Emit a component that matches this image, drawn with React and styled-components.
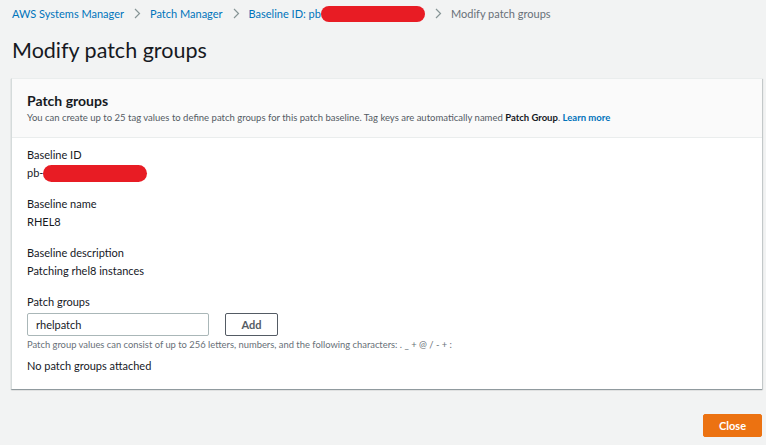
import React from 'react';
import styled, { createGlobalStyle } from 'styled-components';

const GlobalStyle = createGlobalStyle`
  html, body {
    margin: 0;
    padding: 0;
    background: #f2f3f3;
  }
  body {
    font-family: Lato, "Open Sans", Arial, sans-serif;
    color: #16191f;
  }
`;

const Page = styled.div`
  width: 766px;
  height: 445px;
  box-sizing: border-box;
  padding: 0 4px 0 11px;
  display: flex;
  flex-direction: column;
`;

const Crumbs = styled.nav`
  display: flex;
  align-items: center;
  height: 27px;
  font-size: 11px;
  padding-left: 1px;
`;

const Crumb = styled.span`
  color: ${props => (props.current ? '#687078' : '#0073bb')};
  white-space: nowrap;
  display: inline-flex;
  align-items: center;
`;

const Sep = styled.span`
  display: inline-flex;
  align-items: center;
  margin: 0 9px 0 10px;
  color: #879596;
`;

const Redact = styled.span`
  display: inline-block;
  width: ${props => props.w}px;
  height: ${props => props.h}px;
  border-radius: ${props => props.h / 2}px;
  background: #e81c24;
  vertical-align: middle;
`;

const Title = styled.h1`
  margin: 8px 0 13px;
  font-size: 21.5px;
  font-weight: 400;
  line-height: 30px;
  padding-left: 1px;
`;

const Card = styled.section`
  background: #fff;
  border-top: 1px solid #eaeded;
  border-left: 1px solid #d5dbdb;
  box-shadow: 0 1px 1px 0 rgba(0, 28, 36, 0.3), 1px 1px 1px 0 rgba(0, 28, 36, 0.15);
`;

const CardHeader = styled.header`
  background: #fafafa;
  border-bottom: 1px solid #eaeded;
  padding: 12px 15px 12px;
`;

const CardTitle = styled.h2`
  margin: 0;
  font-size: 14px;
  font-weight: 700;
  line-height: 20px;
`;

const CardDesc = styled.p`
  margin: 0;
  font-size: 9.5px;
  line-height: 14px;
  color: #545b64;
  white-space: nowrap;
  b { font-weight: 700; color: #16191f; }
  a { color: #0073bb; font-weight: 700; text-decoration: none; }
`;

const CardBody = styled.div`
  padding: 8px 15px 14px;
  display: flex;
  flex-direction: column;
  gap: 13px;
`;

const Field = styled.div`
  display: flex;
  flex-direction: column;
`;

const Label = styled.div`
  font-size: 11px;
  line-height: 18px;
`;

const Value = styled.div`
  font-size: 11px;
  line-height: 18px;
  display: flex;
  align-items: center;
`;

const InputRow = styled.div`
  display: flex;
  align-items: center;
  gap: 16px;
  margin-top: 2px;
`;

const Input = styled.input`
  box-sizing: border-box;
  width: 182px;
  height: 23px;
  border: 1px solid #aab7b8;
  border-radius: 2px;
  padding: 0 8px;
  font-family: inherit;
  font-size: 11px;
  color: #16191f;
  background: #fff;
  outline: none;
`;

const Button = styled.button`
  box-sizing: border-box;
  height: ${props => props.h || 23}px;
  width: ${props => props.w}px;
  padding: 0;
  border-radius: 2px;
  font-family: inherit;
  font-size: 11px;
  font-weight: 700;
  cursor: pointer;
  border: 1px solid ${props => (props.primary ? '#ec7211' : '#545b64')};
  background: ${props => (props.primary ? '#ec7211' : '#fff')};
  color: ${props => (props.primary ? '#fff' : '#545b64')};
`;

const Hint = styled.div`
  font-size: 9.4px;
  line-height: 12px;
  color: #687078;
  margin-top: 3px;
  white-space: nowrap;
`;

const Empty = styled.div`
  font-size: 11px;
  line-height: 18px;
  margin-top: -7px;
`;

const Footer = styled.div`
  display: flex;
  justify-content: flex-end;
  padding-top: 25px;
`;

const Chevron = () => (
  <svg width="7" height="11" viewBox="0 0 7 11">
    <path d="M1 1l4.5 4.5L1 10" fill="none" stroke="#879596" strokeWidth="1.2" />
  </svg>
);

export default function App() {
  return (
    <>
      <GlobalStyle />
      <Page>
        <Crumbs>
          <Crumb>AWS Systems Manager</Crumb>
          <Sep><Chevron /></Sep>
          <Crumb>Patch Manager</Crumb>
          <Sep><Chevron /></Sep>
          <Crumb>Baseline ID: pb<Redact w={104} h={16} /></Crumb>
          <Sep><Chevron /></Sep>
          <Crumb current>Modify patch groups</Crumb>
        </Crumbs>
        <Title>Modify patch groups</Title>
        <Card>
          <CardHeader>
            <CardTitle>Patch groups</CardTitle>
            <CardDesc>
              You can create up to 25 tag values to define patch groups for this patch baseline. Tag keys are automatically named <b>Patch Group</b>. <a href="#">Learn more</a>
            </CardDesc>
          </CardHeader>
          <CardBody>
            <Field>
              <Label>Baseline ID</Label>
              <Value>pb-<Redact w={104} h={17} /></Value>
            </Field>
            <Field>
              <Label>Baseline name</Label>
              <Value>RHEL8</Value>
            </Field>
            <Field>
              <Label>Baseline description</Label>
              <Value>Patching rhel8 instances</Value>
            </Field>
            <Field>
              <Label>Patch groups</Label>
              <InputRow>
                <Input defaultValue="rhelpatch" />
                <Button w={53}>Add</Button>
              </InputRow>
              <Hint>Patch group values can consist of up to 256 letters, numbers, and the following characters: . _ + @ / - + :</Hint>
            </Field>
            <Empty>No patch groups attached</Empty>
          </CardBody>
        </Card>
        <Footer>
          <Button primary w={59}>Close</Button>
        </Footer>
      </Page>
    </>
  );
}
